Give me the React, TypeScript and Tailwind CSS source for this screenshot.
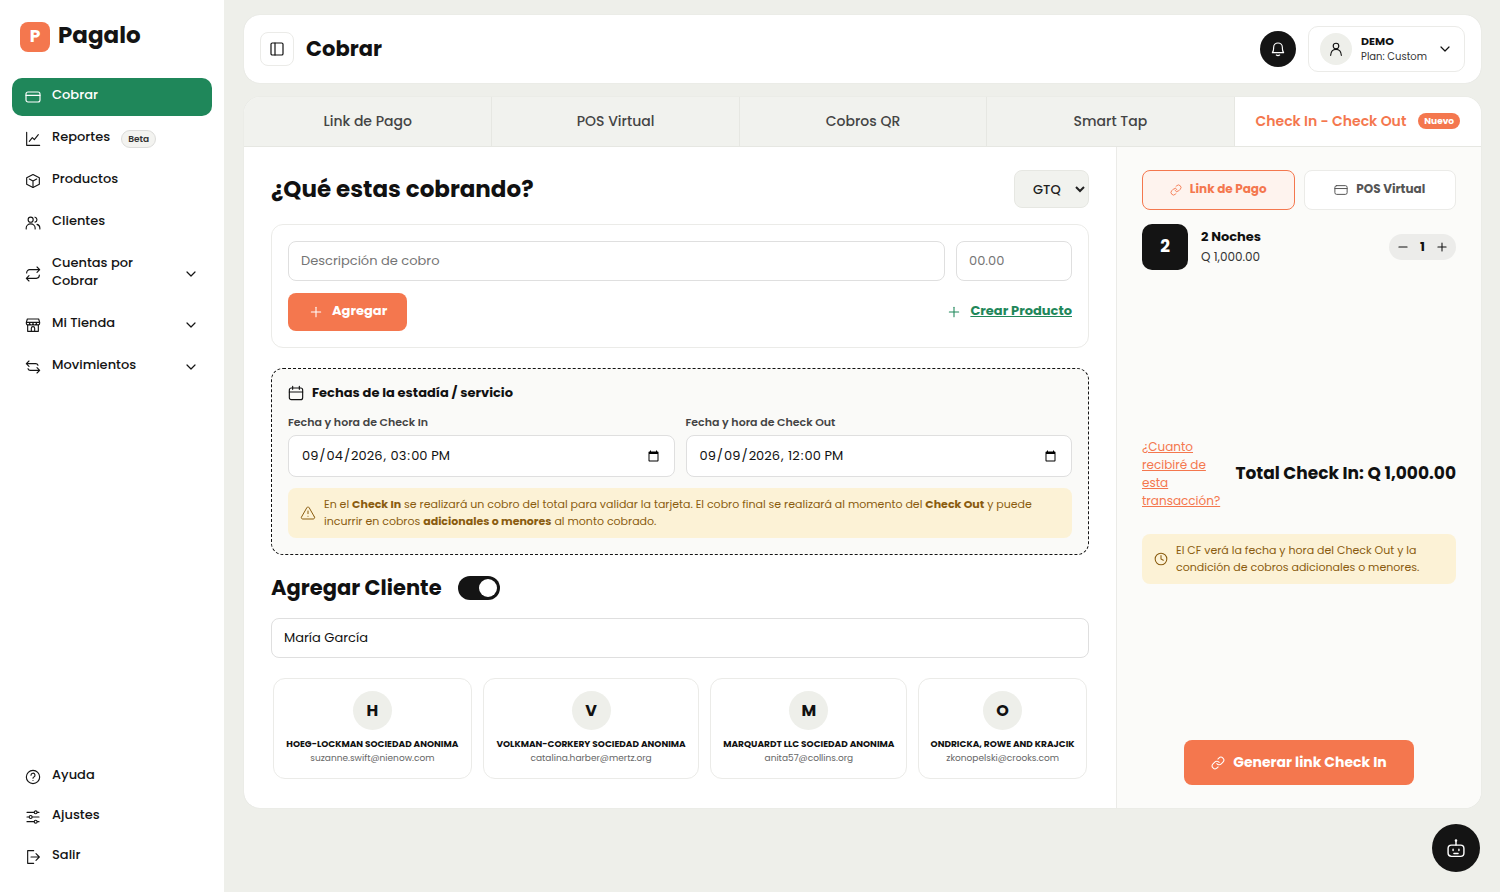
import { useState } from "react";
import type { ReactNode } from "react";
import { ChevronDown, Clock, Link, Minus, PanelLeft, Plus, TriangleAlert } from "lucide-react";
import clsx from "clsx";

const Svg = ({ children, className = "size-4" }: { children: ReactNode; className?: string }) => (
  <svg
    viewBox="0 0 24 24"
    fill="none"
    stroke="currentColor"
    strokeWidth="1.7"
    strokeLinecap="round"
    strokeLinejoin="round"
    className={clsx("shrink-0", className)}
    aria-hidden="true"
  >
    {children}
  </svg>
);

const CardIcon = ({ className }: { className?: string }) => (
  <Svg className={className}>
    <rect x="1.5" y="4.5" width="21" height="15" rx="3" />
    <path d="M1.5 9.5h21" />
  </Svg>
);

const ChartIcon = () => (
  <Svg>
    <path d="M2.5 2v19.5H22" />
    <path d="m6.5 15.5 4.5-5.5 3 3 6-7.5" />
  </Svg>
);

const BoxIcon = () => (
  <Svg>
    <path d="M12 2.2 21.5 7v10L12 21.8 2.5 17V7Z" />
    <path d="m6.5 9 5.5 3 5.5-3M12 12v9.5" />
  </Svg>
);

const UsersIcon = () => (
  <Svg>
    <circle cx="8.5" cy="7" r="3.8" />
    <path d="M1.8 21v-1.5a6.7 6.2 0 0 1 13.4 0V21" />
    <path d="M15 3.3a3.8 3.8 0 0 1 0 7.4M18 14c2.8.8 4.3 2.8 4.3 5.5V21" />
  </Svg>
);

const UserIcon = () => (
  <Svg>
    <circle cx="12" cy="7.5" r="4.2" />
    <path d="M4 21.5c.3-5.5 3.2-9 8-9s7.7 3.5 8 9" />
  </Svg>
);

const RepeatIcon = () => (
  <Svg>
    <path d="m18 1.5 4 4-4 4M2.5 10.5V10A4.5 4.5 0 0 1 7 5.5h15" />
    <path d="m6 14.5-4 4 4 4M21.5 13.5v.5a4.5 4.5 0 0 1-4.5 4.5H2" />
  </Svg>
);

const StoreIcon = () => (
  <Svg>
    <path d="M3.5 3h17L22 8v1.5a2.5 2.5 0 0 1-5 0 2.5 2.5 0 0 1-5 0 2.5 2.5 0 0 1-5 0 2.5 2.5 0 0 1-5 0V8Z" />
    <path d="M2.5 8h19M4 12v9.5h16V12M9.5 21.5V17a2.5 2.5 0 0 1 5 0v4.5" />
  </Svg>
);

const ArrowsIcon = () => (
  <Svg>
    <path d="m6 3-4 4 4 4M2 7h14a4 4 0 0 1 3.5 2.5" />
    <path d="m18 13 4 4-4 4M22 17H8a4 4 0 0 1-3.5-2.5" />
  </Svg>
);

const HelpIcon = () => (
  <Svg>
    <circle cx="12" cy="12" r="10" />
    <path d="M9 9.3a3 3 0 1 1 4.3 2.7c-.9.4-1.3 1-1.3 1.9M12 17.2v.1" />
  </Svg>
);

const SlidersIcon = () => (
  <Svg>
    <path d="M3 5h10.500M18.500 5H21M3 12h3M11 12h10M3 19h10.500M18.500 19H21" />
    <circle cx="16" cy="5" r="2.2" />
    <circle cx="8.5" cy="12" r="2.2" />
    <circle cx="16" cy="19" r="2.2" />
  </Svg>
);

const ExitIcon = () => (
  <Svg>
    <path d="M13 2.500H4v19h9M9 12h12M16.500 7l5 5-5 5" />
  </Svg>
);

const BellIcon = () => (
  <Svg>
    <path d="M3.5 17.500c1.7-1.500 2-3 2-8a6.500 6.500 0 0 1 13 0c0 5 .3 6.500 2 8Z" />
    <path d="M9.5 21c1.4 1 3.6 1 5 0" />
  </Svg>
);

const CalendarIcon = () => (
  <Svg>
    <rect x="2" y="4.5" width="20" height="17.5" rx="3" />
    <path d="M2 10.5h20M7 2v4.500M17 2v4.500" />
  </Svg>
);

const RobotIcon = () => (
  <Svg className="size-5">
    <rect x="2.5" y="8.5" width="19" height="13.5" rx="4" />
    <path d="M12 8.500V3.500M8.500 13.500v1.500M15.500 13.500v1.500M9.500 18.500h5" />
    <circle cx="12" cy="3" r=".7" />
  </Svg>
);

type NavItem = { label: string; icon: ReactNode; active?: boolean; beta?: boolean; sub?: boolean };

const mainNav: NavItem[] = [
  { label: "Cobrar", icon: <CardIcon />, active: true },
  { label: "Reportes", icon: <ChartIcon />, beta: true },
  { label: "Productos", icon: <BoxIcon /> },
  { label: "Clientes", icon: <UsersIcon /> },
  { label: "Cuentas por Cobrar", icon: <RepeatIcon />, sub: true },
  { label: "Mi Tienda", icon: <StoreIcon />, sub: true },
  { label: "Movimientos", icon: <ArrowsIcon />, sub: true },
];

const footerNav: NavItem[] = [
  { label: "Ayuda", icon: <HelpIcon /> },
  { label: "Ajustes", icon: <SlidersIcon /> },
  { label: "Salir", icon: <ExitIcon /> },
];

const tabs = ["Link de Pago", "POS Virtual", "Cobros QR", "Smart Tap", "Check In - Check Out"];

const clients = [
  { name: "HOEG-LOCKMAN SOCIEDAD ANONIMA", email: "suzanne.swift@nienow.com" },
  { name: "VOLKMAN-CORKERY SOCIEDAD ANONIMA", email: "catalina.harber@mertz.org" },
  { name: "MARQUARDT LLC SOCIEDAD ANONIMA", email: "anita57@collins.org" },
  { name: "ONDRICKA, ROWE AND KRAJCIK", email: "zkonopelski@crooks.com" },
];

const inputClass =
  "w-full rounded-lg border border-[#dfdfdf] bg-white px-3 text-[13px] text-[#111] placeholder:text-[#757575] outline-none";

const NavLink = ({ item }: { item: NavItem }) => (
  <a
    href="#"
    className={clsx(
      "flex min-h-[38px] items-center gap-[11px] rounded-[10px] px-[13px] py-2 text-[13px] leading-[18px] font-medium",
      item.active ? "bg-[#1f875a] text-white" : "text-[#141414]",
    )}
  >
    {item.icon}
    <span className={clsx("pb-1", item.sub && "max-w-[100px]")}>{item.label}</span>
    {item.beta && (
      <span className="rounded-full border border-[#dcdcda] bg-[#f3f3f0] px-1.5 text-[9px] leading-4 font-semibold text-[#333]">
        Beta
      </span>
    )}
    {item.sub && <ChevronDown className="ml-auto size-4" strokeWidth={1.8} />}
  </a>
);

const Sidebar = () => (
  <aside className="flex w-56 shrink-0 flex-col bg-white px-3 pt-[22px] pb-4">
    <div className="flex items-center gap-2 px-2">
      <div className="flex size-[30px] items-center justify-center rounded-lg bg-[#f4774e] text-[17px] font-bold text-white">
        P
      </div>
      <span className="pb-[3px] text-[23px] leading-[27px] font-bold text-[#141414]">Pagalo</span>
    </div>
    <nav className="mt-[26px] flex flex-col gap-1">
      {mainNav.map((item) => (
        <NavLink key={item.label} item={item} />
      ))}
    </nav>
    <nav className="mt-auto flex flex-col gap-0.5">
      {footerNav.map((item) => (
        <NavLink key={item.label} item={item} />
      ))}
    </nav>
  </aside>
);

const Header = () => (
  <header className="flex h-[68px] items-center rounded-2xl bg-white px-4 shadow-[0_0_1px_#0002]">
    <button
      aria-label="Menú"
      className="flex size-[34px] items-center justify-center rounded-lg border border-[#ebebe8]"
    >
      <PanelLeft className="size-4" strokeWidth={1.8} />
    </button>
    <h1 className="ml-3 text-[21px] leading-7 font-bold">Cobrar</h1>
    <button
      aria-label="Notificaciones"
      className="mr-3 ml-auto flex size-9 items-center justify-center rounded-full bg-[#141414] text-white"
    >
      <BellIcon />
    </button>
    <button className="flex h-[46px] items-center rounded-[10px] border border-[#ebebe8] px-[11px] text-left">
      <span className="flex size-8 items-center justify-center rounded-full bg-[#eeefea]">
        <UserIcon />
      </span>
      <span className="mr-2.5 ml-[9px] flex flex-col">
        <span className="text-[11px] leading-4 font-bold">DEMO</span>
        <span className="text-[10px] leading-4 text-[#333]">Plan: Custom</span>
      </span>
      <ChevronDown className="size-4" strokeWidth={1.8} />
    </button>
  </header>
);

const Tabs = () => (
  <div role="tablist" className="grid h-[50px] grid-cols-5 border-b border-[#e6e7e2] bg-[#f1f2ee]">
    {tabs.map((tab, i) => {
      const active = i === tabs.length - 1;
      return (
        <button
          key={tab}
          role="tab"
          aria-selected={active}
          className={clsx(
            "flex items-center justify-center gap-3 pb-0.5 text-sm whitespace-nowrap",
            i > 0 && "border-l border-[#e6e7e2]",
            active ? "bg-white font-semibold text-[#f4774e]" : "font-medium text-[#444]",
          )}
        >
          {tab}
          {active && (
            <span className="rounded-full bg-[#f4774e] px-1.5 text-[9px] leading-4 font-bold text-white">Nuevo</span>
          )}
        </button>
      );
    })}
  </div>
);

const ProductForm = () => (
  <div className="mt-4 rounded-xl border border-[#ebebe8] p-4">
    <div className="flex gap-[11px]">
      <input aria-label="Descripción de cobro" placeholder="Descripción de cobro" className={clsx(inputClass, "h-10")} />
      <div className="w-[116px] shrink-0">
        <input aria-label="Monto" placeholder="00.00" className={clsx(inputClass, "h-10")} />
      </div>
    </div>
    <div className="mt-3 flex items-center justify-between">
      <button className="flex h-[38px] items-center gap-2 rounded-lg bg-[#f4774e] px-5 text-[13px] font-bold text-white">
        <Plus className="size-4" strokeWidth={1.6} />
        <span className="pb-0.5">Agregar</span>
      </button>
      <a href="#" className="flex items-center gap-2 text-[13px] font-bold text-[#1f875a]">
        <Plus className="size-4" strokeWidth={1.6} />
        <span className="pb-0.5 underline">Crear Producto</span>
      </a>
    </div>
  </div>
);

const StayDates = () => (
  <section className="mt-5 rounded-xl border border-dashed border-[#141414] bg-[#fafaf8] p-4">
    <h3 className="flex items-center gap-2 text-[13px] leading-4 font-bold">
      <CalendarIcon />
      Fechas de la estadía / servicio
    </h3>
    <div className="mt-[13px] grid grid-cols-2 gap-[11px]">
      <label className="text-[11px] leading-4 font-semibold text-[#444]">
        Fecha y hora de Check In
        <input
          type="datetime-local"
          defaultValue="2026-09-04T15:00"
          className={clsx(inputClass, "mt-[5px] h-[42px] font-normal")}
        />
      </label>
      <label className="text-[11px] leading-4 font-semibold text-[#444]">
        Fecha y hora de Check Out
        <input
          type="datetime-local"
          defaultValue="2026-09-09T12:00"
          className={clsx(inputClass, "mt-[5px] h-[42px] font-normal")}
        />
      </label>
    </div>
    <div className="mt-[11px] flex items-center gap-2 rounded-lg bg-[#fcf2d6] px-3 py-2 text-[11px] leading-[17px] text-[#8a5c0f]">
      <TriangleAlert className="size-4 shrink-0" strokeWidth={1.5} />
      <p>
        En el <b>Check In</b> se realizará un cobro del total para validar la tarjeta. El cobro final se realizará al
        momento del <b>Check Out</b> y puede incurrir en cobros <b>adicionales o menores</b> al monto cobrado.
      </p>
    </div>
  </section>
);

const ClientPicker = () => (
  <section className="mt-5">
    <div className="flex items-center gap-4">
      <h2 className="text-[21px] leading-[26px] font-bold">Agregar Cliente</h2>
      <input
        type="checkbox"
        role="switch"
        aria-label="Agregar Cliente"
        defaultChecked
        className="flex h-6 w-[42px] appearance-none items-center rounded-full bg-[#999] px-[3px] before:size-[18px] before:rounded-full before:bg-white checked:justify-end checked:bg-[#141414]"
      />
    </div>
    <input aria-label="Buscar cliente" defaultValue="María García" className={clsx(inputClass, "mt-[17px] h-10")} />
    <div className="mt-5 grid grid-cols-[199fr_217fr_197fr_169fr] gap-[11px] px-0.5">
      {clients.map((client) => (
        <button
          key={client.name}
          className="flex h-[101px] flex-col items-center rounded-xl border border-[#ebebe8] bg-white pt-3 whitespace-nowrap"
        >
          <span className="flex size-[39px] items-center justify-center rounded-full bg-[#eeefea] text-base font-bold">
            {client.name[0]}
          </span>
          <span className="mt-[7px] text-[9px] leading-[14px] font-bold">{client.name}</span>
          <span className="text-[9px] leading-[14px] text-[#666]">{client.email}</span>
        </button>
      ))}
    </div>
  </section>
);

const Summary = () => {
  const [nights, setNights] = useState(1);

  return (
    <aside className="flex w-[365px] shrink-0 flex-col justify-between border-l border-[#ebebe8] bg-[#fbfbf9] px-[25px] py-[23px]">
      <div className="pb-3">
        <div className="grid grid-cols-2 gap-[9px] text-xs font-bold">
          <button className="flex h-10 items-center justify-center gap-2 rounded-lg border border-[#f4774e] bg-[#fef3ee] text-[#f4774e]">
            <Link className="size-3" strokeWidth={1.8} />
            <span className="pb-0.5">Link de Pago</span>
          </button>
          <button className="flex h-10 items-center justify-center gap-2 rounded-lg border border-[#ebebe8] bg-white text-[#555]">
            <CardIcon className="size-3.5" />
            <span className="pb-0.5">POS Virtual</span>
          </button>
        </div>
        <div className="mt-[14px] flex items-center">
          <span className="flex size-[46px] items-center justify-center rounded-[10px] bg-[#141414] text-[17px] font-bold text-white">
            2
          </span>
          <div className="ml-[13px]">
            <p className="text-[13px] leading-5 font-bold">2 Noches</p>
            <p className="text-xs leading-5 text-[#333]">Q 1,000.00</p>
          </div>
          <div className="ml-auto flex h-[26px] items-center gap-[7px] rounded-full bg-[#ececea] px-[7px] text-[13px] font-bold">
            <button aria-label="Restar" onClick={() => setNights(Math.max(1, nights - 1))}>
              <Minus className="size-3.5" strokeWidth={1.8} />
            </button>
            <span className="w-[11px] text-center">{nights}</span>
            <button aria-label="Sumar" onClick={() => setNights(nights + 1)}>
              <Plus className="size-3.5" strokeWidth={1.8} />
            </button>
          </div>
        </div>
      </div>

      <div>
        <div className="flex items-center justify-between">
          <a href="#" className="w-20 text-xs leading-[18px] text-[#f4774e] underline">
            ¿Cuanto recibiré de esta transacción?
          </a>
          <p className="text-[17px] font-bold whitespace-nowrap">Total Check In: Q 1,000.00</p>
        </div>
        <div className="mt-6 flex items-center gap-2 rounded-lg bg-[#fcf2d6] px-3 py-2 text-[11px] leading-[17px] text-[#8a5c0f]">
          <Clock className="size-3.5 shrink-0" strokeWidth={1.8} />
          <p>El CF verá la fecha y hora del Check Out y la condición de cobros adicionales o menores.</p>
        </div>
      </div>

      <button className="flex h-[45px] items-center gap-2 self-center rounded-lg bg-[#f4774e] px-[27px] text-sm font-bold text-white">
        <Link className="size-3.5" strokeWidth={1.8} />
        <span className="pb-0.5">Generar link Check In</span>
      </button>
    </aside>
  );
};

export default function App() {
  return (
    <div className="flex min-h-screen bg-[#eeefea] font-['Poppins','Inter',sans-serif] text-[#111]">
      <Sidebar />
      <main className="min-w-0 flex-1 pt-[15px] pr-[19px] pb-5 pl-5">
        <Header />
        <div className="mt-[14px] overflow-hidden rounded-2xl bg-white shadow-[0_0_1px_#0002]">
          <Tabs />
          <div className="flex">
            <div className="min-w-0 flex-1 px-[27px] pt-[23px] pb-[29px]">
              <div className="flex items-center justify-between">
                <h2 className="text-[23px] leading-8 font-bold">¿Qué estas cobrando?</h2>
                <select
                  aria-label="Moneda"
                  className="h-[38px] w-[75px] rounded-lg border border-[#e6e7e2] bg-[#f1f2ee] pl-[14px] text-[13px] font-medium text-[#222]"
                >
                  <option>GTQ</option>
                  <option>USD</option>
                </select>
              </div>
              <ProductForm />
              <StayDates />
              <ClientPicker />
            </div>
            <Summary />
          </div>
        </div>
      </main>
      <button
        aria-label="Asistente"
        className="fixed right-5 bottom-5 flex size-12 items-center justify-center rounded-full bg-[#141414] text-white"
      >
        <RobotIcon />
      </button>
    </div>
  );
}
